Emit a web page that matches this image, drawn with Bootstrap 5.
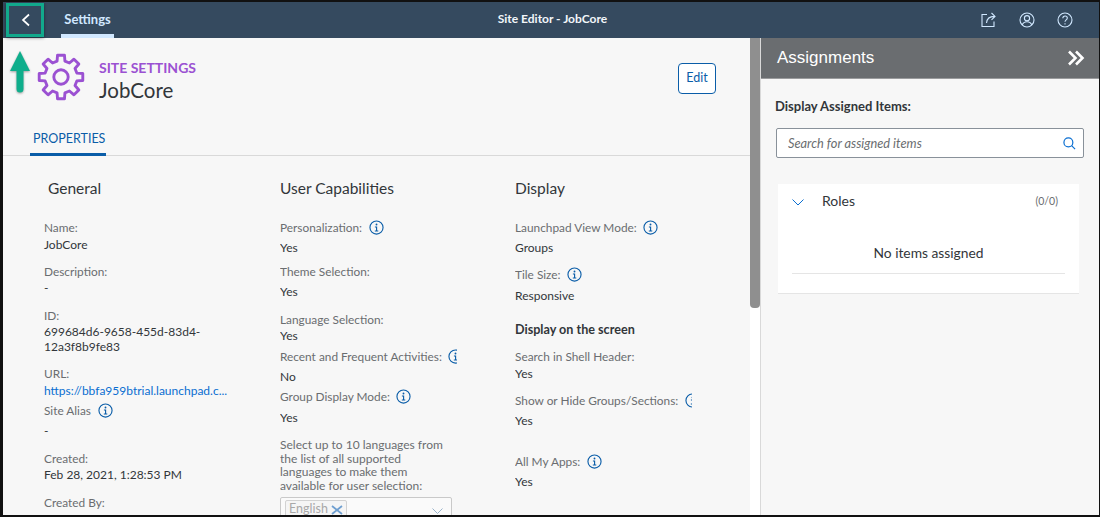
<!DOCTYPE html>
<html lang="en">
<head>
  <meta charset="UTF-8">
  <title>Site Editor - JobCore</title>
  <link href="https://cdn.jsdelivr.net/npm/bootstrap@5.3.0/dist/css/bootstrap.min.css" rel="stylesheet">
  <style>
    html, body { height: 100%; overflow: hidden; background: #f7f7f7; }
    body { font-family: Lato, "Noto Sans", sans-serif; font-size: 12px; color: #32363a; }
    .shot { position: relative; height: 517px; border: solid #111; border-width: 2px 1px 2px 3px; overflow: hidden; display: flex; flex-direction: column; }

    .shell { height: 36px; background: #354a5f; color: #fff; flex: none; }
    .back-btn { width: 45px; height: 36px; color: #fff; }
    .shell-tab { margin-left: 13px; width: 53px; height: 36px; line-height: 34px; text-align: center; color: #d1e8ff; font-weight: 700; font-size: 13px; border-bottom: 4px solid #d1e8ff; }
    .shell-title { font-size: 12px; font-weight: 700; color: #f2f6fa; left: 0; right: 0; line-height: 34px; position: absolute; text-align: center; top: 0; padding-left: 3px; }
    .shell-icons { gap: 20px; padding-right: 25px; color: #d1e8ff; }

    .work { flex: 1; min-height: 0; }
    .left-pane { width: 747px; flex: none; overflow: hidden; background: #f7f7f7; }
    .scroll-track { width: 11px; flex: none; background: #fff; border-right: 1px solid #d9d9d9; }
    .scroll-thumb { width: 10px; height: 270px; background: #8f8f8f; border-radius: 0 0 4px 4px; }
    .right-pane { flex: 1; background: #f7f7f7; }

    .site-head { height: 78px; padding: 15px 34px 0 34px; }
    .site-title-wrap { margin-left: 14px; }
    .site-kicker { font-size: 14px; font-weight: 700; color: #9b51d2; line-height: 18px; margin-top: 6px; }
    .site-name { font-size: 20.5px; line-height: 27px; color: #32363a; }
    .edit-btn { width: 38px; height: 31px; padding: 0; font-size: 12.5px; color: #0a5da8; background: #fff; border: 1px solid #0a5da8; border-radius: 4px; margin-top: 10px; }
    .tab-strip { height: 40px; border-bottom: 1px solid #d9d9d9; padding-left: 27px; }
    .tab-on { display: inline-block; height: 40px; padding: 0 1px 0 3px; font-size: 12.5px; line-height: 46px; color: #0a5da8; border-bottom: 3px solid #0a5da8; }

    .prop-cols { padding-top: 22px; }
    .prop-col { flex: none; overflow: hidden; white-space: nowrap; }
    .col-a { width: 277px; padding-left: 41px; }
    .col-b { width: 235px; }
    .col-c { width: 235px; }
    .col-title { font-size: 15.5px; line-height: 20px; color: #32363a; margin-bottom: 22px; }
    .col-a .col-title { padding-left: 4px; }
    .fld-lbl, .fld-val { line-height: 16px; height: 16px; }
    .fld-lbl { color: #6a6d70; font-size: 11.85px; }
    .fld-val { color: #32363a; }
    .fld-val + .fld-val { margin-top: -1px; }
    .fld-val a { color: #0a6ed1; text-decoration: none; }
    .col-b .fld-lbl, .col-c .fld-lbl { width: 177px; overflow: hidden; }
    .fld-sub { font-weight: 700; font-size: 12.6px; color: #32363a; line-height: 16px; }
    .info-i { width: 15px; height: 15px; margin-left: 3.5px; vertical-align: -3px; color: #0a5da8; }
    .wrap-note { white-space: normal; width: 172px; line-height: 13.5px; color: #6a6d70; }
    .lang-box { width: 172px; height: 30px; border: 1px solid #c9c9c9; border-radius: 2px; background: #fafafa; padding: 2px 4px; margin-top: 5px; }
    .lang-tag { height: 20px; border: 1px solid #d2d2d2; background: #f5f5f5; border-radius: 2px; padding: 0 3px; color: #a8a8a8; line-height: 16px; font-size: 12.5px; }

    .sp1 { margin-top: 1px; } .sp4 { margin-top: 4px; } .sp5 { margin-top: 5px; }
    .sp8 { margin-top: 8px; } .sp11 { margin-top: 11px; } .sp12 { margin-top: 12px; }
    .sp25 { margin-top: 25px; } .sp18 { margin-top: 18px; }

    .assign-head { height: 41px; background: #6a6d70; color: #fff; padding: 0 14px 0 16px; font-family: "Liberation Sans", Arial, sans-serif; font-size: 17px; border-bottom: 1px solid #9a9b9d; }
    .assign-label { font-weight: 700; font-size: 13px; line-height: 18px; padding: 18px 0 1px 14px; color: #32363a; }
    .assign-search { margin: 12px 15px 0 15px; height: 30px; border: 1px solid #89919a; border-radius: 2px; background: #fff; padding: 0 7px 0 11px; }
    .assign-search input { border: 0; outline: 0; flex: 1; min-width: 0; font-size: 12.8px; font-style: italic; background: transparent; padding: 0; margin-top: 1px; }
    .assign-search input::placeholder { color: #6a6d70; opacity: 1; }
    .roles-card { margin: 26px 20px 0 17px; height: 110px; background: #fff; border: 0; border-radius: 0; border-bottom: 1px solid #e5e5e5; padding: 0 14px; }
    .roles-top { height: 33px; }
    .roles-name { margin-left: 18px; font-size: 14px; color: #32363a; line-height: 31px; }
    .roles-count { font-size: 10.5px; color: #6a6d70; padding: 3px 7px 0 0; }
    .roles-empty { text-align: center; font-size: 13.8px; line-height: 18px; margin-top: 27px; padding-bottom: 11px; border-bottom: 1px solid #e5e5e5; color: #32363a; }

    .callout-box { position: absolute; left: 3px; top: 1px; width: 38px; height: 34px; border: 3px solid #12a98c; box-shadow: 0 1px 3px rgba(0,0,0,.45); }
    .callout-arrow { position: absolute; left: 7px; top: 49px; filter: drop-shadow(0 1px 1px rgba(0,0,0,.35)); }
  </style>
</head>
<body>
  <div class="shot">
    <div class="shell d-flex align-items-center position-relative">
      <div class="back-btn d-flex align-items-center justify-content-center">
        <svg width="12" height="14" viewBox="0 0 12 14" fill="none" stroke="currentColor" stroke-width="1.7"><path d="M9 1.5 3 7l6 5.5"/></svg>
      </div>
      <div class="shell-tab">Settings</div>
      <div class="shell-title">Site Editor - JobCore</div>
      <div class="shell-icons d-flex align-items-center ms-auto">
        <svg width="18" height="18" viewBox="0 0 18 18" fill="none" stroke="currentColor" stroke-width="1.1"><path d="M7 3.5H2v12h12v-5M6.5 12c.3-4 3-6.5 8-6.6M11.5 2l3.5 3.4-3.5 3.4"/></svg>
        <svg width="18" height="18" viewBox="0 0 18 18" fill="none" stroke="currentColor" stroke-width="1.1"><circle cx="9" cy="9" r="7"/><circle cx="9" cy="7.2" r="2.6"/><path d="M4.2 14c.8-2.400 2.600-3.300 4.800-3.300s4 .9 4.800 3.300"/></svg>
        <svg width="18" height="18" viewBox="0 0 18 18" fill="none" stroke="currentColor" stroke-width="1.1"><circle cx="9" cy="9" r="7"/><path d="M6.800 7.200C6.900 5.800 7.800 5 9.100 5c1.300 0 2.200.8 2.200 2 0 1.900-2.300 1.800-2.300 3.800"/><path d="M9 12.200v1.300"/></svg>
      </div>
    </div>

    <div class="work d-flex">
      <div class="left-pane">
        <div class="site-head d-flex">
          <svg width="48" height="48" viewBox="-25 -25 50 50" fill="none" stroke="#9b51d2" stroke-width="3" stroke-linejoin="round"><polygon points="3.600,-22.700 4.100,-16.500 8.800,-14.600 13.500,-18.600 18.600,-13.500 14.600,-8.800 16.500,-4.100 22.700,-3.600 22.700,3.600 16.500,4.100 14.600,8.800 18.600,13.500 13.500,18.600 8.800,14.600 4.100,16.500 3.600,22.700 -3.600,22.700 -4.100,16.500 -8.800,14.600 -13.500,18.600 -18.600,13.500 -14.600,8.800 -16.500,4.100 -22.700,3.600 -22.700,-3.600 -16.500,-4.100 -14.600,-8.800 -18.600,-13.500 -13.500,-18.600 -8.800,-14.600 -4.100,-16.500 -3.600,-22.700"/><circle r="7.500"/></svg>
          <div class="site-title-wrap">
            <div class="site-kicker">SITE SETTINGS</div>
            <div class="site-name">JobCore</div>
          </div>
          <button class="edit-btn ms-auto" type="button">Edit</button>
        </div>
        <div class="tab-strip"><span class="tab-on">PROPERTIES</span></div>

        <div class="prop-cols d-flex">
          <div class="prop-col col-a">
            <div class="col-title">General</div>
            <div class="fld-lbl">Name:</div>
            <div class="fld-val sp1">JobCore</div>
            <div class="fld-lbl sp11">Description:</div>
            <div class="fld-val">-</div>
            <div class="fld-lbl sp12">ID:</div>
            <div class="fld-val">699684d6-9658-455d-83d4-</div>
            <div class="fld-val">12a3f8b9fe83</div>
            <div class="fld-lbl sp11">URL:</div>
            <div class="fld-val sp1"><a href="#">https://bbfa959btrial.launchpad.c...</a></div>
            <div class="fld-lbl sp4">Site Alias <svg class="info-i" viewBox="0 0 16 16"><use href="#info"/></svg></div>
            <div class="fld-val sp4">-</div>
            <div class="fld-lbl sp12">Created:</div>
            <div class="fld-val">Feb 28, 2021, 1:28:53 PM</div>
            <div class="fld-lbl sp12">Created By:</div>
          </div>

          <div class="prop-col col-b">
            <div class="col-title">User Capabilities</div>
            <div class="fld-lbl">Personalization: <svg class="info-i" viewBox="0 0 16 16"><use href="#info"/></svg></div>
            <div class="fld-val sp4">Yes</div>
            <div class="fld-lbl sp8">Theme Selection:</div>
            <div class="fld-val sp4">Yes</div>
            <div class="fld-lbl sp12">Language Selection:</div>
            <div class="fld-val">Yes</div>
            <div class="fld-lbl sp5">Recent and Frequent Activities: <svg class="info-i" viewBox="0 0 16 16"><use href="#info"/></svg></div>
            <div class="fld-val sp4">No</div>
            <div class="fld-lbl sp4">Group Display Mode: <svg class="info-i" viewBox="0 0 16 16"><use href="#info"/></svg></div>
            <div class="fld-val sp5">Yes</div>
            <div class="wrap-note sp12">Select up to 10 languages from the list of all supported languages to make them available for user selection:</div>
            <div class="lang-box d-flex align-items-start justify-content-between">
              <span class="lang-tag">English <svg width="12" height="10" viewBox="0 0 12 10" fill="none" stroke="#6f9fd0" stroke-width="1.800"><path d="M1 1l10 8M11 1 1 9"/></svg></span>
              <svg class="mt-2 me-1" width="11" height="7" viewBox="0 0 11 7" fill="none" stroke="#9ab4cc"><path d="M.5.5l5 5 5-5"/></svg>
            </div>
          </div>

          <div class="prop-col col-c">
            <div class="col-title">Display</div>
            <div class="fld-lbl">Launchpad View Mode: <svg class="info-i" viewBox="0 0 16 16"><use href="#info"/></svg></div>
            <div class="fld-val sp4">Groups</div>
            <div class="fld-lbl sp11">Tile Size: <svg class="info-i" viewBox="0 0 16 16"><use href="#info"/></svg></div>
            <div class="fld-val sp5">Responsive</div>
            <div class="fld-sub sp18">Display on the screen</div>
            <div class="fld-lbl sp11">Search in Shell Header:</div>
            <div class="fld-val sp1">Yes</div>
            <div class="fld-lbl sp11">Show or Hide Groups/Sections: <svg class="info-i" viewBox="0 0 16 16"><use href="#info"/></svg></div>
            <div class="fld-val sp4">Yes</div>
            <div class="fld-lbl sp25">All My Apps: <svg class="info-i" viewBox="0 0 16 16"><use href="#info"/></svg></div>
            <div class="fld-val sp4">Yes</div>
          </div>
        </div>
      </div>

      <div class="scroll-track"><div class="scroll-thumb"></div></div>

      <div class="right-pane">
        <div class="assign-head d-flex align-items-center justify-content-between">
          <span>Assignments</span>
          <svg width="18" height="16" viewBox="0 0 18 16" fill="none" stroke="#fff" stroke-width="2.600"><path d="M2 1.500 8.500 8 2 14.500M9 1.500 15.500 8 9 14.500"/></svg>
        </div>
        <div class="assign-label">Display Assigned Items:</div>
        <div class="assign-search d-flex align-items-center">
          <input type="text" placeholder="Search for assigned items">
          <svg width="13" height="13" viewBox="0 0 14 14" fill="none" stroke="#0a6ed1" stroke-width="1.300"><circle cx="5.800" cy="5.800" r="4.800"/><path d="M9.300 9.300 13 13"/></svg>
        </div>
        <div class="card roles-card">
          <div class="roles-top d-flex align-items-center">
            <svg class="mt-1" width="12" height="7" viewBox="0 0 12 7" fill="none" stroke="#0a6ed1"><path d="M.5.5 6 6l5.500-5.500"/></svg>
            <span class="roles-name">Roles</span>
            <span class="roles-count ms-auto">(0/0)</span>
          </div>
          <div class="roles-empty">No items assigned</div>
        </div>
      </div>
    </div>

    <div class="callout-box"></div>
    <svg class="callout-arrow" width="20" height="42" viewBox="0 0 20 42"><path fill="#0fae8c" d="M10 0 20 20h-6.500v18a3 3 0 0 1-7 0V20H0z"/></svg>

    <svg class="d-none">
      <symbol id="info" viewBox="0 0 16 16"><circle cx="8" cy="8" r="7" fill="none" stroke="currentColor" stroke-width="1.200"/><circle cx="8" cy="4.800" r="1" fill="currentColor"/><path d="M6.300 7h2.400v4.300h1.200v1H6.200v-1h1.300V8H6.300z" fill="currentColor"/></symbol>
    </svg>
  </div>
  <script src="https://cdn.jsdelivr.net/npm/bootstrap@5.3.0/dist/js/bootstrap.bundle.min.js"></script>
</body>
</html>
